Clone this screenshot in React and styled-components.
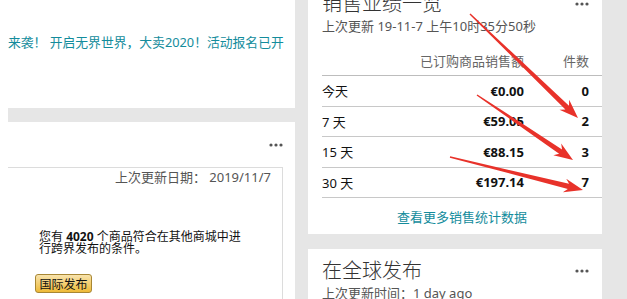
import React from "react";
import styled, { createGlobalStyle } from "styled-components";

const GlobalStyle = createGlobalStyle`
  body {
    margin: 0;
    background: #e6e6e6;
    font-family: "Noto Sans", "Noto Sans CJK SC", sans-serif;
    overflow: hidden;
  }
`;

const Page = styled.div`
  position: relative;
  display: flex;
  width: 627px;
  height: 299px;
  overflow: hidden;
  background: #e6e6e6;
`;

const LeftCol = styled.div`
  width: 295px;
  display: flex;
  flex-direction: column;
  background: #fff;
`;

const Promo = styled.div`
  height: 108px;
  box-sizing: border-box;
  padding: 33px 0 0 8px;
  font-size: 12.8px;
  line-height: 18px;
  color: #138c9c;
  white-space: nowrap;
  overflow: hidden;
`;

const Gap = styled.div`
  height: 14px;
  margin-left: 8px;
  background: #e6e6e6;
`;

const ListingCard = styled.div`
  flex: 1;
  margin-left: 8px;
  padding-right: 12px;
  display: flex;
  flex-direction: column;
`;

const CardHead = styled.div`
  height: 45px;
  display: flex;
  align-items: center;
  justify-content: flex-end;
`;

const InnerBox = styled.div`
  flex: 1;
  border-top: 1px solid #dcdcdc;
  border-right: 1px solid #dcdcdc;
`;

const UpdateDate = styled.div`
  text-align: right;
  padding-right: 11px;
  font-size: 13px;
  line-height: 18px;
  color: #555;
`;

const Body = styled.p`
  margin: 45px 0 0 31px;
  width: 212px;
  font-size: 12px;
  line-height: 12px;
  color: #111;
`;

const Button = styled.button`
  margin: 19px 0 0 27px;
  height: 19px;
  width: 57px;
  padding: 0;
  font-family: inherit;
  font-size: 12px;
  color: #111;
  background: linear-gradient(#f8e3ad, #eeba37);
  border: 1px solid #a88734;
  border-radius: 3px;
`;

const RightCol = styled.div`
  width: 294px;
  margin: -18px 0 0 13px;
  display: flex;
  flex-direction: column;
  gap: 15px;
`;

const Card = styled.div`
  background: #fff;
  padding: 9px 0 8px 14px;
`;

const TitleRow = styled.div`
  display: flex;
  align-items: center;
  justify-content: space-between;
  padding-right: 13px;
`;

const Title = styled.div`
  font-size: 20px;
  line-height: 26px;
  font-weight: 300;
  color: #333;
`;

const Sub = styled.div`
  font-size: 13px;
  line-height: 18px;
  color: #555;
`;

const Row = styled.div`
  display: grid;
  grid-template-columns: 1fr 150px 65px;
  align-items: center;
  padding-right: 13px;
  height: ${(p) => (p.head ? "30px" : "29.5px")};
  margin-top: ${(p) => (p.head ? "10px" : "0")};
  border-bottom: 1px solid ${(p) => (p.head ? "#bdbdbd" : "#c8c8c8")};
  font-size: 13px;
  color: ${(p) => (p.head ? "#666" : "#111")};
`;

const Cell = styled.span`
  text-align: ${(p) => (p.right ? "right" : "left")};
  font-weight: ${(p) => (p.bold ? 700 : 400)};
`;

const MoreLink = styled.a`
  display: block;
  margin-top: 10px;
  text-align: center;
  font-size: 13px;
  line-height: 18px;
  color: #138c9c;
`;

const Overlay = styled.svg`
  position: absolute;
  left: 0;
  top: 0;
  pointer-events: none;
`;

const Dots = () => (
  <svg width="14" height="4" viewBox="0 0 14 4">
    {[2, 7, 12].map((x) => (
      <circle key={x} cx={x} cy="2" r="1.6" fill="#555" />
    ))}
  </svg>
);

const arrowPoints = (x1, y1, x2, y2) => {
  const dx = x2 - x1;
  const dy = y2 - y1;
  const len = Math.hypot(dx, dy);
  const ux = dx / len;
  const uy = dy / len;
  const nx = -uy;
  const ny = ux;
  const bx = x2 - ux * 19;
  const by = y2 - uy * 19;
  const nbx = x2 - ux * 15;
  const nby = y2 - uy * 15;
  const pts = [
    [x1 + nx * 0.7, y1 + ny * 0.7],
    [nbx + nx * 2.6, nby + ny * 2.6],
    [bx + nx * 7, by + ny * 7],
    [x2, y2],
    [bx - nx * 7, by - ny * 7],
    [nbx - nx * 2.6, nby - ny * 2.6],
    [x1 - nx * 0.7, y1 - ny * 0.7],
  ];
  return pts.map((p) => p.join(",")).join(" ");
};

const arrows = [
  [470, 14, 578, 118],
  [477, 95, 573, 160],
  [450, 157, 583, 190],
];

const rows = [
  ["今天", "€0.00", "0"],
  ["7 天", "€59.05", "2"],
  ["15 天", "€88.15", "3"],
  ["30 天", "€197.14", "7"],
];

export default function App() {
  return (
    <Page>
      <GlobalStyle />
      <LeftCol>
        <Promo>来袭！ 开启无界世界，大卖2020！活动报名已开</Promo>
        <Gap />
        <ListingCard>
          <CardHead>
            <Dots />
          </CardHead>
          <InnerBox>
            <UpdateDate>上次更新日期： 2019/11/7</UpdateDate>
            <Body>
              您有 <b>4020</b> 个商品符合在其他商城中进行跨界发布的条件。
            </Body>
            <Button>国际发布</Button>
          </InnerBox>
        </ListingCard>
      </LeftCol>

      <RightCol>
        <Card>
          <TitleRow>
            <Title>销售业绩一览</Title>
            <Dots />
          </TitleRow>
          <Sub>上次更新 19-11-7 上午10时35分50秒</Sub>
          <Row head>
            <span />
            <Cell right>已订购商品销售额</Cell>
            <Cell right>件数</Cell>
          </Row>
          {rows.map(([label, amount, count]) => (
            <Row key={label}>
              <Cell>{label}</Cell>
              <Cell right bold>{amount}</Cell>
              <Cell right bold>{count}</Cell>
            </Row>
          ))}
          <MoreLink>查看更多销售统计数据</MoreLink>
        </Card>
        <Card>
          <TitleRow>
            <Title>在全球发布</Title>
            <Dots />
          </TitleRow>
          <Sub>上次更新时间：1 day ago</Sub>
        </Card>
      </RightCol>

      <Overlay width="627" height="299">
        {arrows.map((a, i) => (
          <polygon key={i} points={arrowPoints(...a)} fill="#e8322a" />
        ))}
      </Overlay>
    </Page>
  );
}
